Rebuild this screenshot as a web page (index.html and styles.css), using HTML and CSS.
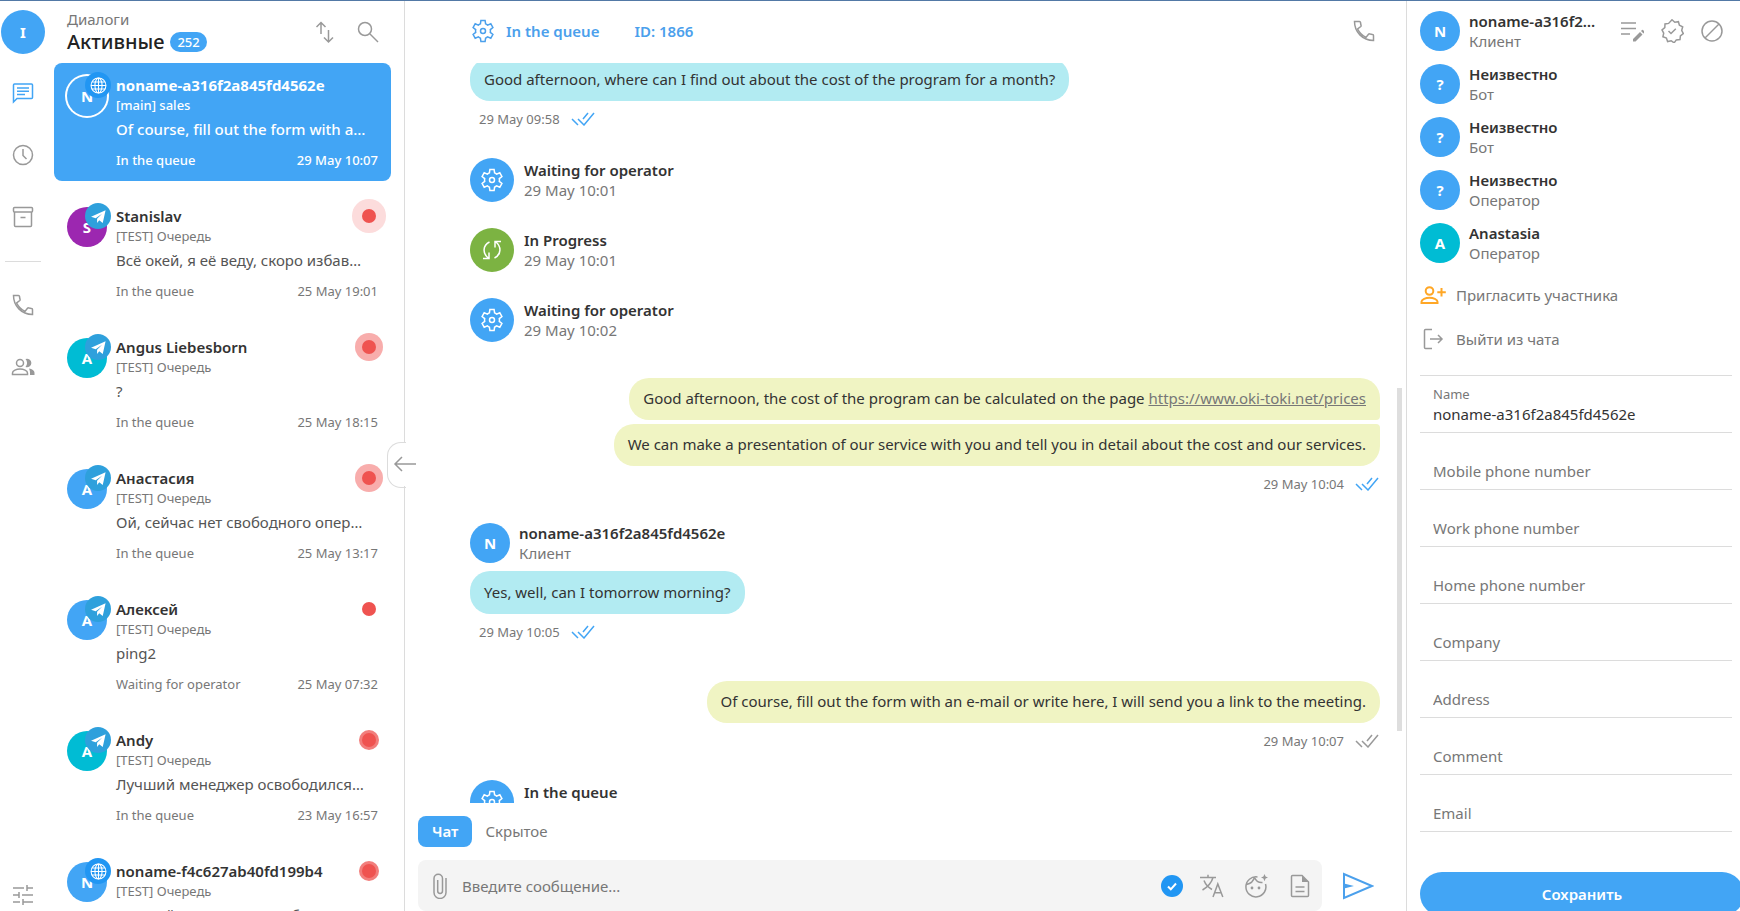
FILE: index.html
```html
<!DOCTYPE html>
<html lang="ru">
<head>
    <meta charset="UTF-8">
    <meta name="viewport" content="width=device-width, initial-scale=1.0">
    <title>Диалоги</title>
    <link rel="stylesheet" href="styles.css">
</head>
<body>
    <!-- icon set -->
    <svg class="sprite" aria-hidden="true">
        <symbol id="i-chat" viewBox="0 0 24 24"><path d="M2.5 21V4a1 1 0 0 1 1-1h17a1 1 0 0 1 1 1v12.500a1 1 0 0 1-1 1H6z"/><path d="M6 7h12M6 10.300h12M6 13.600h8"/></symbol>
        <symbol id="i-clock" viewBox="0 0 24 24"><circle cx="12" cy="12" r="9.500"/><path d="M12 6v6.500l3.500 3.500"/></symbol>
        <symbol id="i-archive" viewBox="0 0 24 24"><rect x="2.500" y="2.500" width="19" height="4.500" rx="1"/><path d="M3.500 7v13.500a1 1 0 0 0 1 1h15a1 1 0 0 0 1-1V7M9.500 12.500h5"/></symbol>
        <symbol id="i-phone" viewBox="0 0 24 24"><path d="M2.500 2.500h5c.6 0 .9.300 1 .9.100 1.200.3 2.100.6 3 .1.400 0 .8-.3 1.100L5.600 10c2 4 4.400 6.400 8.400 8.400l2.500-3.200c.3-.3.700-.4 1.100-.3 1 .3 2 .5 3 .6.500 0 .9.400.9.900v5C10.500 21.400 2.500 13 2.500 2.500z"/></symbol>
        <symbol id="i-people" viewBox="0 0 24 24"><circle cx="9" cy="8" r="3.500"/><path d="M1.500 19.500v-1.500c0-2.500 4-4 7.500-4s7.500 1.500 7.500 4v1.500z"/><path class="solid" d="M14.500 4a4.300 4.300 0 1 1 0 8 6 6 0 0 0 0-8zM18 13.500c3 .6 5.500 2 5.500 4.300V20H19v-2.200c0-1.800-.4-3.200-1-4.300z"/></symbol>
        <symbol id="i-tune" viewBox="0 0 24 24"><path d="M2 5h11M16 5h6M16 2v6M2 12h6M8 9v6M11 12h11M2 19h7M12 19h10M12 16v6"/></symbol>
        <symbol id="i-sort" viewBox="0 0 24 24"><path d="M8 14V2.500M3.500 7 8 2.500 12.500 7M15.500 10v12M11 17.500l4.500 4.500 4.500-4.500"/></symbol>
        <symbol id="i-search" viewBox="0 0 24 24"><circle cx="9" cy="9" r="6.500"/><path d="m14 14 8 8"/></symbol>
        <symbol id="i-gear" viewBox="0 0 24 24"><path d="M9.900 1.500h4.200l.5 3.400c.8.300 1.400.7 2 1.200l3.200-1.300 2.100 3.700-2.600 2.100c.2.900.2 1.900 0 2.800l2.600 2.100-2.100 3.700-3.200-1.300c-.6.500-1.300.9-2 1.200l-.5 3.400H9.900l-.5-3.400c-.8-.3-1.400-.7-2-1.200l-3.200 1.300-2.100-3.700 2.600-2.100c-.2-.9-.2-1.900 0-2.800L2.100 8.500l2.100-3.700 3.200 1.300c.6-.5 1.300-.9 2-1.200z"/><circle cx="12" cy="12" r="2.500"/></symbol>
        <symbol id="i-sync" viewBox="0 0 24 24"><path d="M9.500 4C2.500 7.500 2.500 15.500 8.200 20M3 20.500h6V14.500M14.500 20c7-3.500 7-11.500 1.300-16M21 3.500h-6V9.500"/></symbol>
        <symbol id="i-ticks" viewBox="0 0 24 14"><path d="m1 7 6 6M7 7l6 6L23 1M12 7l5-6"/></symbol>
        <symbol id="i-globe" viewBox="0 0 24 24"><circle cx="12" cy="12" r="10.500"/><ellipse cx="12" cy="12" rx="5" ry="10.500"/><path d="M12 1.500v21M1.500 12h21M3 7h18M3 17h18"/></symbol>
        <symbol id="i-plane" viewBox="0 0 24 24"><path class="solid" d="M22 3 1.500 12.500 8 14.500 17 8l-7 7.300V21l3-3.600 5 3.600z"/></symbol>
        <symbol id="i-back" viewBox="0 0 24 24"><path d="M23 12H2M9 5l-7 7 7 7"/></symbol>
        <symbol id="i-edit" viewBox="0 0 24 24"><path d="M1 4h15M1 9.500h15M1 15h9"/><path class="solid" d="m13 20 7-7 2.500 2.500-7 7H13zM21 12l1-1a.8.8 0 0 1 1 0l1.500 1.500a.8.8 0 0 1 0 1l-1 1z"/></symbol>
        <symbol id="i-verified" viewBox="0 0 24 24"><path d="m12 .8 2.800 2.400 3.600-.5 1 3.500 3.300 1.600-1 3.600 1.600 3.200-2.900 2.300-.4 3.700-3.700.3-2.200 3-2.900-2.200-3.600.8-1.200-3.400-3.500-1.300.8-3.700-1.700-3.200 2.800-2.300.2-3.700 3.600-.5z"/><path d="m8.500 12 2.500 2.500 4.800-4.800"/></symbol>
        <symbol id="i-block" viewBox="0 0 24 24"><circle cx="12" cy="12" r="10"/><path d="M5 19 19 5"/></symbol>
        <symbol id="i-invite" viewBox="0 0 26 24"><circle cx="9.500" cy="8" r="3.800"/><path d="M1.500 20v-1.200c0-2.500 4.300-4 8-4s8 1.500 8 4V20zM21.500 5v8.500M17.300 9.200h8.500"/></symbol>
        <symbol id="i-exit" viewBox="0 0 24 24"><path d="M11 2.500H4.500a1 1 0 0 0-1 1v17a1 1 0 0 0 1 1H11M9 12h12M17 8l4 4-4 4"/></symbol>
        <symbol id="i-clip" viewBox="0 0 14 26"><path d="M13 5v14.500a5.500 5.500 0 0 1-12 0V5.500a4 4 0 0 1 8.500 0v12.500a2.300 2.300 0 0 1-4.800 0V7"/></symbol>
        <symbol id="i-check" viewBox="0 0 24 24"><circle class="solid" cx="12" cy="12" r="11"/><path class="mark" d="m8 12.500 2.800 2.800L16 9.500"/></symbol>
        <symbol id="i-translate" viewBox="0 0 24 24"><path d="M0 3.500h16M8 .8v2.700M13 3.500C11.500 9 7.500 13 2.500 16M4 6.500c1.500 4 4.500 7 8 9M13 23l4.800-13L22.800 23M14.500 18.700h7"/></symbol>
        <symbol id="i-face" viewBox="0 0 24 24"><path d="M13.500 3A10 10 0 1 0 21.500 10M2.500 10.500C7 9.500 9.500 7 10.500 3.200M10.500 3.500c1.600 3.700 5 5.300 8 5"/><circle class="solid" cx="8" cy="14" r="1.400"/><circle class="solid" cx="15" cy="14" r="1.400"/><path class="solid" d="m20.500 0 1.100 2.600 2.400 1-2.400 1-1.100 2.600-1.100-2.600-2.400-1 2.400-1z"/></symbol>
        <symbol id="i-doc" viewBox="0 0 24 24"><path d="M3.500 2.500a1 1 0 0 1 1-1H14l6.500 6.500v13.500a1 1 0 0 1-1 1h-15a1 1 0 0 1-1-1zM7.500 13h9M7.500 17.500h9"/><path class="solid" d="M14 1.500 20.500 8H14z"/></symbol>
        <symbol id="i-send" viewBox="0 0 32 28"><path d="M2 2v24L30 14z"/><path class="solid" d="m2 11.500 10 2.500-10 2.500z"/></symbol>
    </svg>

    <div class="app">
        <nav class="rail">
            <div class="avatar avatar-lg">I</div>
            <a href="#" class="rail-link active" aria-label="Чаты"><svg class="icon"><use href="#i-chat"/></svg></a>
            <a href="#" class="rail-link" aria-label="История"><svg class="icon"><use href="#i-clock"/></svg></a>
            <a href="#" class="rail-link" aria-label="Архив"><svg class="icon"><use href="#i-archive"/></svg></a>
            <hr class="rail-divider">
            <a href="#" class="rail-link" aria-label="Звонки"><svg class="icon"><use href="#i-phone"/></svg></a>
            <a href="#" class="rail-link" aria-label="Контакты"><svg class="icon"><use href="#i-people"/></svg></a>
            <a href="#" class="rail-link rail-bottom" aria-label="Настройки"><svg class="icon"><use href="#i-tune"/></svg></a>
        </nav>

        <aside class="dialogs">
            <header class="dialogs-header">
                <div class="dialogs-title">
                    <div class="dialogs-section">Диалоги</div>
                    <h1>Активные <span class="count">252</span></h1>
                </div>
                <button class="icon-btn" aria-label="Сортировка"><svg class="icon"><use href="#i-sort"/></svg></button>
                <button class="icon-btn" aria-label="Поиск"><svg class="icon"><use href="#i-search"/></svg></button>
            </header>

            <div class="dialog-list">
                <article class="dialog selected">
                    <div class="dialog-avatar">
                        <div class="avatar">N</div>
                        <span class="channel web"><svg class="icon"><use href="#i-globe"/></svg></span>
                    </div>
                    <div class="dialog-body">
                        <div class="dialog-name">noname-a316f2a845fd4562e</div>
                        <div class="dialog-queue">[main] sales</div>
                        <div class="dialog-text">Of course, fill out the form with a…</div>
                        <div class="dialog-meta"><span>In the queue</span><span>29 May 10:07</span></div>
                    </div>
                </article>
                <article class="dialog">
                    <div class="dialog-avatar">
                        <div class="avatar purple">S</div>
                        <span class="channel"><svg class="icon"><use href="#i-plane"/></svg></span>
                    </div>
                    <div class="dialog-body">
                        <div class="dialog-name">Stanislav</div>
                        <div class="dialog-queue">[TEST] Очередь</div>
                        <div class="dialog-text">Всё окей, я её веду, скоро избав…</div>
                        <div class="dialog-meta"><span>In the queue</span><span>25 May 19:01</span></div>
                    </div>
                    <span class="pulse pulse-4"></span>
                </article>
                <article class="dialog">
                    <div class="dialog-avatar">
                        <div class="avatar cyan">A</div>
                        <span class="channel"><svg class="icon"><use href="#i-plane"/></svg></span>
                    </div>
                    <div class="dialog-body">
                        <div class="dialog-name">Angus Liebesborn</div>
                        <div class="dialog-queue">[TEST] Очередь</div>
                        <div class="dialog-text">?</div>
                        <div class="dialog-meta"><span>In the queue</span><span>25 May 18:15</span></div>
                    </div>
                    <span class="pulse pulse-3"></span>
                </article>
                <article class="dialog">
                    <div class="dialog-avatar">
                        <div class="avatar">А</div>
                        <span class="channel"><svg class="icon"><use href="#i-plane"/></svg></span>
                    </div>
                    <div class="dialog-body">
                        <div class="dialog-name">Анастасия</div>
                        <div class="dialog-queue">[TEST] Очередь</div>
                        <div class="dialog-text">Ой, сейчас нет свободного опер…</div>
                        <div class="dialog-meta"><span>In the queue</span><span>25 May 13:17</span></div>
                    </div>
                    <span class="pulse pulse-3"></span>
                </article>
                <article class="dialog">
                    <div class="dialog-avatar">
                        <div class="avatar">А</div>
                        <span class="channel"><svg class="icon"><use href="#i-plane"/></svg></span>
                    </div>
                    <div class="dialog-body">
                        <div class="dialog-name">Алексей</div>
                        <div class="dialog-queue">[TEST] Очередь</div>
                        <div class="dialog-text">ping2</div>
                        <div class="dialog-meta"><span>Waiting for operator</span><span>25 May 07:32</span></div>
                    </div>
                    <span class="pulse"></span>
                </article>
                <article class="dialog">
                    <div class="dialog-avatar">
                        <div class="avatar cyan">A</div>
                        <span class="channel"><svg class="icon"><use href="#i-plane"/></svg></span>
                    </div>
                    <div class="dialog-body">
                        <div class="dialog-name">Andy</div>
                        <div class="dialog-queue">[TEST] Очередь</div>
                        <div class="dialog-text">Лучший менеджер освободился…</div>
                        <div class="dialog-meta"><span>In the queue</span><span>23 May 16:57</span></div>
                    </div>
                    <span class="pulse pulse-2"></span>
                </article>
                <article class="dialog">
                    <div class="dialog-avatar">
                        <div class="avatar">N</div>
                        <span class="channel web"><svg class="icon"><use href="#i-globe"/></svg></span>
                    </div>
                    <div class="dialog-body">
                        <div class="dialog-name">noname-f4c627ab40fd199b4</div>
                        <div class="dialog-queue">[TEST] Очередь</div>
                        <div class="dialog-text">Лучший менеджер освободился…</div>
                    </div>
                    <span class="pulse pulse-2"></span>
                </article>
            </div>
        </aside>

        <main class="chat">
            <button class="collapse" aria-label="Свернуть"><svg class="icon"><use href="#i-back"/></svg></button>

            <header class="chat-header">
                <svg class="icon"><use href="#i-gear"/></svg>
                <span class="chat-status">In the queue</span>
                <span class="chat-id">ID: 1866</span>
                <button class="icon-btn" aria-label="Позвонить"><svg class="icon"><use href="#i-phone"/></svg></button>
            </header>

            <section class="messages">
                <div class="message-list">
                    <div class="group">
                        <div class="bubble">Good afternoon, where can I find out about the cost of the program for a month?</div>
                        <div class="stamp read">29 May 09:58 <svg class="ticks"><use href="#i-ticks"/></svg></div>
                    </div>
                    <div class="event">
                        <div class="avatar avatar-lg"><svg class="icon"><use href="#i-gear"/></svg></div>
                        <div><div class="title">Waiting for operator</div><div class="subtitle">29 May 10:01</div></div>
                    </div>
                    <div class="event">
                        <div class="avatar avatar-lg green"><svg class="icon"><use href="#i-sync"/></svg></div>
                        <div><div class="title">In Progress</div><div class="subtitle">29 May 10:01</div></div>
                    </div>
                    <div class="event">
                        <div class="avatar avatar-lg"><svg class="icon"><use href="#i-gear"/></svg></div>
                        <div><div class="title">Waiting for operator</div><div class="subtitle">29 May 10:02</div></div>
                    </div>
                    <div class="group own">
                        <div class="bubble first">Good afternoon, the cost of the program can be calculated on the page <a href="#">https://www.oki-toki.net/prices</a></div>
                        <div class="bubble last">We can make a presentation of our service with you and tell you in detail about the cost and our services.</div>
                        <div class="stamp read">29 May 10:04 <svg class="ticks"><use href="#i-ticks"/></svg></div>
                    </div>
                    <div class="group">
                        <div class="person">
                            <div class="avatar">N</div>
                            <div><div class="title">noname-a316f2a845fd4562e</div><div class="subtitle">Клиент</div></div>
                        </div>
                        <div class="bubble">Yes, well, can I tomorrow morning?</div>
                        <div class="stamp read">29 May 10:05 <svg class="ticks"><use href="#i-ticks"/></svg></div>
                    </div>
                    <div class="group own">
                        <div class="bubble">Of course, fill out the form with an e-mail or write here, I will send you a link to the meeting.</div>
                        <div class="stamp">29 May 10:07 <svg class="ticks"><use href="#i-ticks"/></svg></div>
                    </div>
                    <div class="event">
                        <div class="avatar avatar-lg"><svg class="icon"><use href="#i-gear"/></svg></div>
                        <div><div class="title">In the queue</div><div class="subtitle">29 May 10:07</div></div>
                    </div>
                </div>
                <span class="scrollbar"></span>
            </section>

            <div class="tabs">
                <button class="tab active">Чат</button>
                <button class="tab">Скрытое</button>
            </div>

            <form class="composer">
                <div class="composer-box">
                    <button type="button" class="icon-btn" aria-label="Прикрепить файл"><svg class="clip"><use href="#i-clip"/></svg></button>
                    <input type="text" placeholder="Введите сообщение..." aria-label="Сообщение">
                    <button type="button" class="icon-btn check" aria-label="Проверка"><svg class="icon"><use href="#i-check"/></svg></button>
                    <button type="button" class="icon-btn" aria-label="Перевод"><svg class="icon"><use href="#i-translate"/></svg></button>
                    <button type="button" class="icon-btn" aria-label="Эмодзи"><svg class="icon"><use href="#i-face"/></svg></button>
                    <button type="button" class="icon-btn" aria-label="Шаблоны"><svg class="icon"><use href="#i-doc"/></svg></button>
                </div>
                <button type="button" class="send" aria-label="Отправить"><svg><use href="#i-send"/></svg></button>
            </form>
        </main>

        <aside class="details">
            <div class="members">
                <div class="person">
                    <div class="avatar">N</div>
                    <div class="person-text"><div class="title">noname-a316f2…</div><div class="subtitle">Клиент</div></div>
                    <div class="person-actions">
                        <button class="icon-btn" aria-label="Изменить"><svg class="icon"><use href="#i-edit"/></svg></button>
                        <button class="icon-btn" aria-label="Подтвердить"><svg class="icon"><use href="#i-verified"/></svg></button>
                        <button class="icon-btn" aria-label="Заблокировать"><svg class="icon"><use href="#i-block"/></svg></button>
                    </div>
                </div>
                <div class="person">
                    <div class="avatar">?</div>
                    <div class="person-text"><div class="title">Неизвестно</div><div class="subtitle">Бот</div></div>
                </div>
                <div class="person">
                    <div class="avatar">?</div>
                    <div class="person-text"><div class="title">Неизвестно</div><div class="subtitle">Бот</div></div>
                </div>
                <div class="person">
                    <div class="avatar">?</div>
                    <div class="person-text"><div class="title">Неизвестно</div><div class="subtitle">Оператор</div></div>
                </div>
                <div class="person">
                    <div class="avatar cyan">A</div>
                    <div class="person-text"><div class="title">Anastasia</div><div class="subtitle">Оператор</div></div>
                </div>
            </div>

            <div class="actions">
                <button class="action invite"><svg class="icon"><use href="#i-invite"/></svg>Пригласить участника</button>
                <button class="action"><svg class="icon"><use href="#i-exit"/></svg>Выйти из чата</button>
            </div>

            <form class="fields">
                <div class="field">
                    <label for="name">Name</label>
                    <input type="text" id="name" value="noname-a316f2a845fd4562e">
                </div>
                <div class="field"><input type="text" aria-label="Mobile phone number" placeholder="Mobile phone number"></div>
                <div class="field"><input type="text" aria-label="Work phone number" placeholder="Work phone number"></div>
                <div class="field"><input type="text" aria-label="Home phone number" placeholder="Home phone number"></div>
                <div class="field"><input type="text" aria-label="Company" placeholder="Company"></div>
                <div class="field"><input type="text" aria-label="Address" placeholder="Address"></div>
                <div class="field"><input type="text" aria-label="Comment" placeholder="Comment"></div>
                <div class="field"><input type="text" aria-label="Email" placeholder="Email"></div>
                <button type="button" class="save">Сохранить</button>
            </form>
        </aside>
    </div>
</body>
</html>
```
FILE: styles.css
```css
* {
    box-sizing: border-box;
}

body {
    margin: 0;
    font-family: 'Noto Sans', 'Open Sans', sans-serif;
    font-size: 15px;
    color: #333;
    background: #fff;
}

button,
input {
    font: inherit;
    color: inherit;
    border: none;
    background: none;
    padding: 0;
    outline: none;
}

button {
    cursor: pointer;
}

h1 {
    margin: 0;
}

.sprite {
    display: none;
}

.icon {
    display: block;
    width: 24px;
    height: 24px;
    flex: none;
}

svg {
    fill: none;
    stroke: currentColor;
    stroke-width: 1.5;
}

.solid {
    fill: currentColor;
    stroke: none;
}

.mark {
    stroke: #fff;
    stroke-width: 2;
}

.icon-btn {
    display: flex;
    flex: none;
    align-items: center;
    justify-content: center;
    color: #999;
}

.app {
    display: flex;
    height: 100vh;
    overflow: hidden;
    border-top: 1px solid #5279a6;
}

.avatar {
    display: flex;
    flex: none;
    align-items: center;
    justify-content: center;
    width: 40px;
    height: 40px;
    border-radius: 50%;
    background: #42a5f5;
    color: #fff;
    font-weight: 700;
}

.avatar-lg {
    width: 44px;
    height: 44px;
}

.avatar.purple {
    background: #9c27b0;
}

.avatar.cyan {
    background: #00bcd4;
}

.avatar.green {
    background: #7cb342;
}

/* left rail */
.rail {
    display: flex;
    flex-direction: column;
    align-items: center;
    flex: none;
    width: 46px;
    padding: 9px 0 4px;
}

.rail-link {
    margin-top: 38px;
    color: #999;
}

.avatar + .rail-link {
    margin-top: 27px;
}

.rail-link.active {
    color: #42a5f5;
}

.rail-divider {
    width: 36px;
    margin: 32px 0 -7px;
    border: none;
    border-top: 1px solid #dcdcdc;
}

.rail-bottom {
    margin-top: auto;
}

/* dialog list */
.dialogs {
    display: flex;
    flex-direction: column;
    flex: none;
    width: 359px;
    padding: 0 13px 0 8px;
    border-right: 1px solid #dcdcdc;
}

.dialogs-header {
    display: flex;
    align-items: center;
    flex: none;
    gap: 19px;
    height: 62px;
    padding: 0 11px 0 13px;
}

.dialogs-title {
    flex: 1;
}

.dialogs-section {
    line-height: 20px;
    color: #777;
}

.dialogs h1 {
    display: flex;
    align-items: center;
    gap: 6px;
    font-size: 20px;
    line-height: 26px;
    font-weight: 500;
    color: #222;
}

.count {
    padding: 0 7px;
    border-radius: 10px;
    background: #42a5f5;
    color: #fff;
    font-size: 13px;
    line-height: 20px;
}

.dialog-list {
    display: flex;
    flex-direction: column;
    gap: 13px;
}

.dialog {
    position: relative;
    display: flex;
    flex: none;
    gap: 7px;
    padding: 12px 13px 12px 11px;
    border-radius: 8px;
    color: #777;
}

.dialog-avatar {
    position: relative;
    flex: none;
    width: 44px;
    height: 40px;
    margin-top: 1px;
    padding: 0 2px;
}

.channel {
    position: absolute;
    top: -4px;
    right: -2px;
    display: flex;
    align-items: center;
    justify-content: center;
    width: 26px;
    height: 26px;
    border-radius: 50%;
    background: #2ea0dc;
    color: #fff;
}

.channel.web {
    background: #2196f3;
}

.channel .icon {
    width: 17px;
    height: 17px;
}

.dialog-body {
    flex: 1;
    min-width: 0;
}

.dialog-name {
    line-height: 20px;
    font-weight: 600;
    color: #333;
}

.dialog-queue {
    font-size: 13px;
    line-height: 20px;
}

.dialog-text {
    margin: 3px 0 11px;
    white-space: nowrap;
    line-height: 22px;
    color: #555;
}

.dialog-meta {
    display: flex;
    justify-content: space-between;
    font-size: 13px;
    line-height: 18px;
}

.dialog.selected,
.dialog.selected .dialog-name,
.dialog.selected .dialog-text {
    color: #fff;
}

.dialog.selected {
    background: #42a5f5;
    font-weight: 500;
}

.dialog.selected .dialog-name {
    font-weight: 700;
}

.dialog.selected .avatar {
    box-shadow: 0 0 0 2px #fff;
}

.pulse {
    position: absolute;
    top: 15px;
    right: 15px;
    width: 14px;
    height: 14px;
    border-radius: 50%;
    background: #ef5350;
}

.pulse-2 {
    box-shadow: 0 0 0 3px #f27e7c;
}

.pulse-3 {
    box-shadow: 0 0 0 7px #f8adac;
}

.pulse-4 {
    box-shadow: 0 0 0 10px #fcdcdc;
}

/* chat */
.chat {
    position: relative;
    display: flex;
    flex-direction: column;
    flex: 1;
    min-width: 0;
}

.collapse {
    position: absolute;
    left: -18px;
    top: 441px;
    display: flex;
    align-items: center;
    justify-content: center;
    width: 36px;
    height: 44px;
    background: #fff;
    color: #999;
}

/* outline only on the part that sticks out of the chat column */
.collapse::before {
    content: '';
    position: absolute;
    top: 0;
    left: 0;
    width: 18px;
    height: 44px;
    border: 1px solid #dcdcdc;
    border-right: none;
    border-radius: 14px 0 0 14px;
}

.chat-header {
    display: flex;
    align-items: center;
    flex: none;
    height: 62px;
    padding: 0 30px 2px 66px;
    font-weight: 600;
    color: #4ba0ec;
}

.chat-status {
    margin-left: 11px;
}

.chat-id {
    margin-left: 35px;
}

.chat-header .icon-btn {
    margin-left: auto;
}

.messages {
    position: relative;
    flex: 1;
    min-height: 0;
    overflow: hidden;
}

/* scrolled a few pixels past the first bubble */
.message-list {
    margin-top: -5px;
    padding: 0 26px 0 65px;
}

.group {
    display: flex;
    flex-direction: column;
    align-items: flex-start;
    padding-bottom: 30px;
}

.group.own {
    align-items: flex-end;
    padding-top: 10px;
}

.bubble {
    padding: 10px 14px 11px;
    border-radius: 20px;
    background: #b2ebf2;
    line-height: 22px;
    color: #333;
}

.own .bubble {
    padding: 9px 14px 11px;
    background: #f0f4c3;
}

.own .bubble.first {
    margin-bottom: 4px;
    border-bottom-right-radius: 4px;
}

.own .bubble.last {
    border-top-right-radius: 4px;
}

.bubble a {
    color: #777;
}

.stamp {
    display: flex;
    align-items: center;
    gap: 11px;
    margin-top: 9px;
    padding: 0 1px 0 9px;
    font-size: 13px;
    line-height: 18px;
    color: #777;
}

.ticks {
    width: 24px;
    height: 14px;
    color: #999;
}

.read .ticks {
    color: #42a5f5;
}

.event {
    display: flex;
    align-items: center;
    gap: 10px;
    padding-bottom: 26px;
}

.title {
    line-height: 20px;
    font-weight: 600;
}

.subtitle {
    line-height: 20px;
    color: #777;
}

.person {
    display: flex;
    gap: 9px;
}

.group .person {
    padding-bottom: 8px;
}

.scrollbar {
    position: absolute;
    top: 325px;
    right: 4px;
    width: 5px;
    height: 343px;
    background: #dedede;
}

.tabs {
    display: flex;
    flex: none;
    gap: 13px;
    padding: 13px;
}

.tab {
    line-height: 31px;
    color: #777;
}

.tab.active {
    padding: 0 14px;
    border-radius: 8px;
    background: #42a5f5;
    color: #fff;
    font-weight: 600;
}

.composer {
    display: flex;
    align-items: center;
    flex: none;
    gap: 20px;
    padding: 0 32px 0 13px;
}

.composer-box {
    display: flex;
    align-items: center;
    flex: 1;
    gap: 20px;
    height: 51px;
    padding: 0 10px 0 15px;
    border-radius: 8px;
    background: #f4f4f4;
}

.composer-box input {
    flex: 1;
    min-width: 0;
}

.composer input::placeholder,
.fields input::placeholder {
    color: #777;
    opacity: 1;
}

.clip {
    width: 14px;
    height: 26px;
    margin-right: -5px;
}

.composer-box .check {
    margin-right: -4px;
    color: #2196f3;
}

.send {
    color: #4ba0ec;
}

.send svg {
    display: block;
    width: 32px;
    height: 28px;
    stroke-width: 2;
}

/* client details */
.details {
    display: flex;
    flex-direction: column;
    flex: none;
    width: 334px;
    padding: 10px 8px 0 13px;
    border-left: 1px solid #dcdcdc;
}

.members {
    display: flex;
    flex-direction: column;
    gap: 13px;
}

.person-text {
    white-space: nowrap;
}

.person-actions {
    display: flex;
    flex: none;
    gap: 16px;
    margin-left: auto;
    padding-right: 8px;
}

.actions {
    display: flex;
    flex-direction: column;
    gap: 20px;
    padding: 20px 0 24px;
}

.action {
    display: flex;
    align-items: center;
    gap: 10px;
    line-height: 24px;
    color: #777;
}

.action .icon {
    width: 26px;
    color: #999;
}

.action.invite .icon {
    color: #ffa726;
    stroke-width: 2;
}

.fields {
    border-top: 1px solid #dcdcdc;
}

.field {
    display: flex;
    flex-direction: column;
    justify-content: flex-end;
    height: 57px;
    padding: 0 13px 7px;
    border-bottom: 1px solid #dcdcdc;
}

.field label {
    font-size: 13px;
    line-height: 18px;
    color: #777;
}

.field input {
    width: 100%;
    height: 22px;
}

.save {
    display: block;
    width: calc(100% + 12px);
    height: 44px;
    margin-top: 40px;
    border-radius: 22px;
    background: #42a5f5;
    color: #fff;
    font-weight: 600;
}
```
